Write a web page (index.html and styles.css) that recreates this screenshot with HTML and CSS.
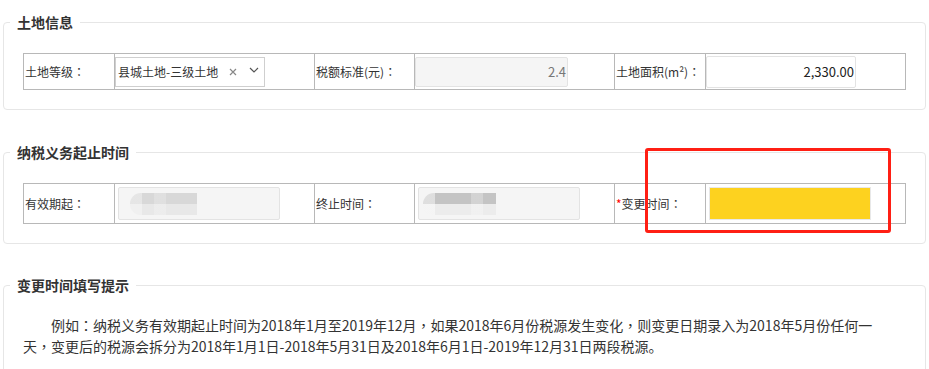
FILE: index.html
```html
<!DOCTYPE html>
<html lang="zh-CN">
<head>
<meta charset="utf-8">
<title>土地信息</title>
<link rel="stylesheet" href="styles.css">
</head>
<body>
<fieldset class="box box-land">
  <legend class="box-title">土地信息</legend>
  <table class="grid grid-land">
    <colgroup>
      <col class="c-label"><col class="c-field"><col class="c-label2"><col class="c-field"><col class="c-label"><col class="c-field-last">
    </colgroup>
    <tr>
      <td class="lbl">土地等级<span class="pc" lang="zh-TW">：</span></td>
      <td>
        <div class="select">
          <span class="select-text">县城土地-三级土地</span>
          <span class="select-clear">
            <svg width="8" height="8" viewBox="0 0 8 8"><path d="M1 1L7 7M7 1L1 7" stroke="#888" stroke-width="1.2" fill="none"/></svg>
          </span>
          <span class="select-arrow">
            <svg width="10" height="6" viewBox="0 0 10 6"><path d="M1 1L5 5L9 1" stroke="#555" stroke-width="1.2" fill="none"/></svg>
          </span>
        </div>
      </td>
      <td class="lbl">税额标准(元)<span class="pc" lang="zh-TW">：</span></td>
      <td><div class="inp inp-ro inp-tax">2.4</div></td>
      <td class="lbl">土地面积(m²)<span class="pc" lang="zh-TW">：</span></td>
      <td><div class="inp inp-area">2,330.00</div></td>
    </tr>
  </table>
</fieldset>

<fieldset class="box box-tax">
  <legend class="box-title">纳税义务起止时间</legend>
  <table class="grid grid-tax">
    <colgroup>
      <col class="c-label"><col class="c-field"><col class="c-label2"><col class="c-field"><col class="c-label"><col class="c-field-last">
    </colgroup>
    <tr>
      <td class="lbl">有效期起<span class="pc" lang="zh-TW">：</span></td>
      <td><div class="inp inp-ro inp-date"><span class="blur blur-a"></span></div></td>
      <td class="lbl">终止时间<span class="pc" lang="zh-TW">：</span></td>
      <td><div class="inp inp-ro inp-date"><span class="blur blur-b"></span></div></td>
      <td class="lbl"><span class="req">*</span>变更时间<span class="pc" lang="zh-TW">：</span></td>
      <td><div class="inp inp-date inp-yellow"></div></td>
    </tr>
  </table>
</fieldset>

<fieldset class="box box-tip">
  <legend class="box-title">变更时间填写提示</legend>
  <p class="tip">例如<span class="pc" lang="zh-TW">：</span>纳税义务有效期起止时间为2018年1月至2019年12月<span class="pc" lang="zh-TW">，</span>如果2018年6月份税源发生变化<span class="pc" lang="zh-TW">，</span>则变更日期录入为2018年5月份任何一天<span class="pc" lang="zh-TW">，</span>变更后的税源会拆分为2018年1月1日-2018年5月31日及2018年6月1日-2019年12月31日两段税源。</p>
</fieldset>

<div class="mark"></div>
</body>
</html>
```

FILE: styles.css
```css
html, body {
  margin: 0;
  padding: 0;
  background: #fff;
}
body {
  position: relative;
  font-family: "Noto Sans CJK SC", "Noto Sans", sans-serif;
  color: #333;
  font-size: 12px;
}
.pc {
  font-family: "Noto Sans CJK TC", sans-serif;
}
.box {
  margin: 0 3px;
  border: 1px solid #e6e6e6;
  border-radius: 4px;
  padding: 0 19px 19px;
  min-width: 0;
}
.box-land { margin-top: 12px; }
.box-tax { margin-top: 32px; }
.box-tip { margin-top: 31px; }
.box-title {
  margin-left: -13px;
  padding: 0 7px;
  font-size: 14px;
  font-weight: bold;
  line-height: 20px;
  color: #333;
}
.grid {
  width: 882px;
  margin-top: 21px;
  border-collapse: collapse;
  table-layout: fixed;
}
.c-label { width: 91px; }
.c-label2 { width: 100px; }
.c-field { width: 200px; }
.c-field-last { width: 200px; }
.grid td {
  border: 1px solid #b8b8b8;
  padding: 0;
  vertical-align: middle;
  white-space: nowrap;
}
.grid-land td { height: 35px; }
.grid-tax td { height: 39px; }
.grid td.lbl {
  padding-left: 1px;
  font-size: 12px;
  color: #333;
}
.req { color: #f00; }

.select {
  display: flex;
  align-items: center;
  box-sizing: border-box;
  width: 150px;
  height: 30px;
  border: 1px solid #cfcfcf;
  padding-left: 2px;
  font-size: 12px;
}
.select-text { flex: 0 0 auto; }
.select-clear {
  display: flex;
  margin-left: 11px;
}
.select-arrow {
  display: flex;
  margin-left: 12px;
  margin-top: -3px;
}

.inp {
  box-sizing: border-box;
  height: 30px;
  border: 1px solid #e3e3e3;
  border-radius: 2px;
  display: flex;
  align-items: center;
  justify-content: flex-end;
  padding-right: 1px;
  font-size: 13px;
}
.inp-ro { background: #f5f5f5; }
.inp-tax { width: 153px; color: #777; }
.inp-area { width: 150px; height: 32px; color: #222; }
.inp-date {
  width: 162px;
  height: 33px;
  margin-left: 3px;
  justify-content: flex-start;
}
.inp-yellow {
  background: #fdd21f;
  border-color: #e8e8e8;
  border-radius: 0;
}
.blur {
  display: block;
  height: 22px;
  border-radius: 11px 0 0 11px;
}
.blur-a {
  width: 67px;
  margin-left: 11px;
  background:
    linear-gradient(to right, rgba(255,255,255,0.35) 0 12px, transparent 12px 24px, rgba(255,255,255,0.2) 24px 36px, transparent 36px),
    linear-gradient(to bottom, #d8d8d8 0 50%, #e8e8e8 50% 100%);
}
.blur-b {
  width: 73px;
  margin-left: 4px;
  background:
    linear-gradient(to right, rgba(255,255,255,0.45) 0 12px, transparent 12px 48px, rgba(255,255,255,0.25) 48px 60px, transparent 60px),
    linear-gradient(to bottom, #c4c4c4 0 50%, #ececec 50% 100%);
}

.tip {
  margin: 20px 0 0;
  font-size: 14px;
  line-height: 21px;
  text-indent: 2em;
  color: #333;
  width: 866px;
}

.mark {
  position: absolute;
  left: 645px;
  top: 148px;
  width: 240px;
  height: 79px;
  border: 3px solid #ff1f14;
  border-radius: 3px;
}
```
